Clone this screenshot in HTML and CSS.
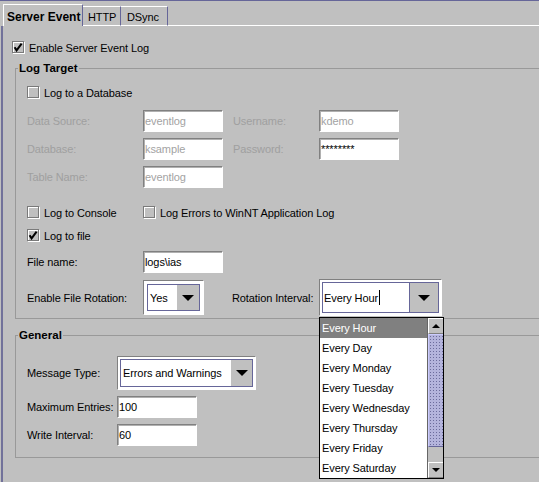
FILE: index.html
```html
<!DOCTYPE html>
<html lang="en">
<head>
<meta charset="utf-8">
<title>Server Event</title>
<link rel="stylesheet" href="styles.css">
</head>
<body>
<div class="window">
  <div class="tabstrip">
    <div class="tab selected">Server Event</div>
    <div class="tab http">HTTP</div>
    <div class="tab dsync">DSync</div>
    <div class="tabfill"></div>
  </div>
  <div class="panel">
    <div class="check enable"><span class="box"><svg viewBox="0 0 10 10" width="10" height="10"><path d="M1.6 5.2 L3.6 8.4 L8.6 1.6" fill="none" stroke="#000" stroke-width="2"/></svg></span>Enable Server Event Log</div>
    <fieldset class="group target">
      <legend>Log Target</legend>
      <div class="check db"><span class="box"></span>Log to a Database</div>
      <div class="dbgrid">
        <span class="lbl dis">Data Source:</span><span class="field dis">eventlog</span><span class="lbl dis">Username:</span><span class="field dis">kdemo</span>
        <span class="lbl dis">Database:</span><span class="field dis">ksample</span><span class="lbl dis">Password:</span><span class="field">********</span>
        <span class="lbl dis">Table Name:</span><span class="field dis">eventlog</span>
      </div>
      <div class="checkrow">
        <div class="check console"><span class="box"></span>Log to Console</div>
        <div class="check"><span class="box"></span>Log Errors to WinNT Application Log</div>
      </div>
      <div class="check tofile"><span class="box"><svg viewBox="0 0 10 10" width="10" height="10"><path d="M1.6 5.2 L3.6 8.4 L8.6 1.6" fill="none" stroke="#000" stroke-width="2"/></svg></span>Log to file</div>
      <div class="row filename"><span class="lbl col1">File name:</span><span class="field">logs\ias</span></div>
      <div class="row rotation">
        <span class="lbl col1">Enable File Rotation:</span>
        <div class="combo yes"><div class="cbox"><span class="ctext">Yes</span><span class="carrow"><i class="tri"></i></span></div></div>
        <span class="lbl rotlbl">Rotation Interval:</span>
        <div class="combo interval">
          <div class="cbox editable"><span class="ctext">Every Hour<i class="caret"></i></span><span class="carrow"><i class="tri"></i></span></div>
          <div class="popup">
            <ul class="list">
              <li class="sel">Every Hour</li>
              <li>Every Day</li>
              <li>Every Monday</li>
              <li>Every Tuesday</li>
              <li>Every Wednesday</li>
              <li>Every Thursday</li>
              <li>Every Friday</li>
              <li>Every Saturday</li>
            </ul>
            <div class="sbar">
              <div class="sbtn up"><i class="stri up"></i></div>
              <div class="thumb"></div>
              <div class="track"></div>
              <div class="sbtn down"><i class="stri down"></i></div>
            </div>
          </div>
        </div>
      </div>
    </fieldset>
    <fieldset class="group general">
      <legend>General</legend>
      <div class="row msg"><span class="lbl col2">Message Type:</span><div class="combo msgtype"><div class="cbox"><span class="ctext">Errors and Warnings</span><span class="carrow"><i class="tri"></i></span></div></div></div>
      <div class="row maxent"><span class="lbl col2">Maximum Entries:</span><span class="field">100</span></div>
      <div class="row wint"><span class="lbl col2">Write Interval:</span><span class="field">60</span></div>
    </fieldset>
  </div>
</div>
</body>
</html>
```
FILE: styles.css
```css
* { box-sizing: border-box; }
html, body { margin: 0; padding: 0; }
body {
  width: 539px;
  height: 482px;
  overflow: hidden;
  background: #c0c0c0;
  font-family: "Liberation Sans", Arial, sans-serif;
  font-size: 11px;
  letter-spacing: -0.1px;
  color: #000;
}
.window {
  height: 482px;
  border-top: 1px solid #666699;
  display: flex;
  flex-direction: column;
}

/* tabs */
.tabstrip {
  display: flex;
  align-items: flex-end;
  height: 25px;
  padding-left: 3px;
  flex: none;
}
.tab {
  height: 20px;
  padding-top: 3px;
  border-top: 1px solid #fff;
  border-right: 1px solid #666699;
  border-bottom: 1px solid #fff;
  line-height: 14px;
  white-space: nowrap;
}
.tab.selected {
  width: 80px;
  height: 22px;
  padding-top: 5px;
  padding-left: 3px;
  border-left: 1px solid #fff;
  border-bottom: none;
  font-size: 12px;
  font-weight: bold;
  letter-spacing: 0;
}
.tab.http { width: 38px; padding-left: 5px; }
.tab.dsync { width: 47px; padding-left: 6px; }
.tabfill {
  flex: 1;
  height: 1px;
  background: #fff;
}

/* panel */
.panel {
  flex: 1;
  margin-left: 1px;
  border-left: 2px solid #72729a;
}

/* checkboxes */
.check {
  display: flex;
  align-items: center;
  height: 13px;
  white-space: nowrap;
}
.box {
  flex: none;
  width: 12px;
  height: 12px;
  margin-right: 5px;
  border: 1px solid #7a7a7a;
  box-shadow: inset 1px 1px 0 #fff, 1px 1px 0 #fff;
  margin-bottom: 1px;
}
.box svg { display: block; }
.enable { margin: 15px 0 0 9px; }

/* group boxes */
.group {
  margin: 7px -20px 0 12px;
  padding: 0 0 2px 11px;
  border: 1px solid #999;
  min-width: 0;
}
.group legend {
  margin-left: -9px;
  padding: 0 1px;
  font-size: 11.5px;
  font-weight: bold;
  line-height: 15px;
  letter-spacing: 0;
}
.group.general {
  margin-top: 9px;
  padding-bottom: 11px;
}

.db { margin-top: 10px; }
.dbgrid {
  margin-top: 11px;
  display: grid;
  grid-template-columns: 116px 90px 86px 80px;
  grid-auto-rows: 22px;
  row-gap: 6px;
  align-items: center;
}
.lbl { flex: none; white-space: nowrap; }
.dis { color: #9f9f9f; }
.field {
  display: block;
  width: 80px;
  height: 22px;
  background: #fff;
  border: 1px solid;
  border-color: #808080 #fff #fff #808080;
  box-shadow: inset 1px 1px 0 #b0b0b0;
  padding-left: 1px;
  line-height: 20px;
  white-space: nowrap;
  flex: none;
}
.field.dis { color: #a3a3a3; }

.checkrow { display: flex; margin-top: 18px; }
.checkrow .console { width: 116px; }
.tofile { margin-top: 10px; }

.row { display: flex; align-items: center; }
.col1 { width: 116px; }
.col2 { width: 90px; }
.filename { margin-top: 9px; }
.rotation { margin-top: 6px; height: 37px; }
.rotlbl { width: 87px; margin-left: 28px; }

/* combos */
.combo {
  flex: none;
  background: #fff;
  border: 1px solid;
  border-color: #808080 #fff #fff #808080;
  padding: 2px;
  display: flex;
}
.combo.yes { width: 61px; height: 35px; padding: 3px; }
.combo.interval { width: 123px; height: 37px; position: relative; }
.combo.msgtype { width: 139px; height: 34px; }
.cbox {
  flex: 1;
  display: flex;
  border: 1px solid #666699;
}
.ctext {
  flex: 1;
  display: flex;
  align-items: center;
  padding-left: 2px;
  background: #fff;
  white-space: nowrap;
}
.carrow {
  flex: none;
  width: 21px;
  display: flex;
  align-items: center;
  justify-content: center;
  background: #c0c0c0;
}
.yes .carrow { width: 22px; }
.tri {
  display: block;
  width: 0;
  height: 0;
  border-left: 6px solid transparent;
  border-right: 6px solid transparent;
  border-top: 6px solid #000;
}
.cbox.editable { border: none; }
.editable .ctext {
  width: 88px;
  flex: none;
  border: 1px solid #666699;
  padding-left: 1px;
}
.editable .carrow {
  width: 29px;
  border: 1px solid #666699;
  border-left: none;
}
.caret {
  display: block;
  width: 1px;
  height: 15px;
  margin-left: 1px;
  background: #000;
}

/* popup list */
.popup {
  position: absolute;
  left: -1px;
  top: 37px;
  width: 125px;
  height: 162px;
  border: 1px solid #000;
  background: #fff;
  display: flex;
  z-index: 5;
}
.list {
  flex: 1;
  margin: 0;
  padding: 0;
  list-style: none;
}
.list li {
  height: 20px;
  line-height: 20px;
  padding-left: 2px;
  white-space: nowrap;
}
.list li.sel { background: #808080; color: #fff; }
.sbar {
  flex: none;
  width: 16px;
  display: flex;
  flex-direction: column;
  border-left: 1px solid #666;
  background: #c0c0c0;
}
.sbtn {
  height: 16px;
  flex: none;
  display: flex;
  align-items: center;
  justify-content: center;
  border-top: 1px solid #fff;
  border-left: 1px solid #fff;
  border-bottom: 1px solid #808080;
}
.stri {
  display: block;
  width: 0;
  height: 0;
  border-left: 4px solid transparent;
  border-right: 4px solid transparent;
}
.stri.up { border-bottom: 4px solid #000; }
.stri.down { border-top: 4px solid #000; }
.thumb {
  height: 113px;
  flex: none;
  background-color: #b4b4dc;
  background-image: radial-gradient(circle, #6c6c9c 0.7px, transparent 0.9px);
  background-size: 3px 3px;
  border-top: 1px solid #ccccff;
  border-left: 1px solid #ccccff;
  border-bottom: 1px solid #666699;
}
.track {
  flex: 1;
  background: #c0c0c0;
}

.msg { margin-top: 13px; }
.maxent { margin-top: 6px; }
.wint { margin-top: 6px; }
```
